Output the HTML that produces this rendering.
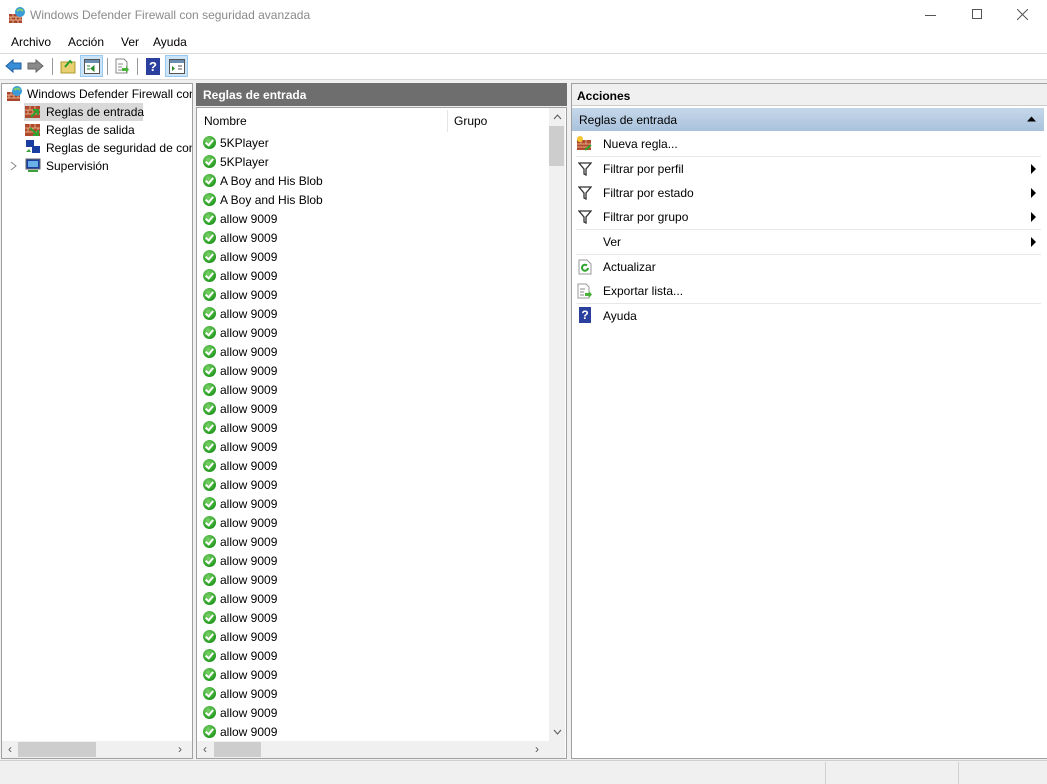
<!DOCTYPE html>
<html><head><meta charset="utf-8"><style>
*{margin:0;padding:0;box-sizing:border-box}
body{width:1047px;height:784px;overflow:hidden;background:#f0f0f0;font-family:"Segoe UI","Liberation Sans",sans-serif;font-size:12px;color:#000;position:relative}
.a{position:absolute}
.t{position:absolute;white-space:nowrap;line-height:16px}
.chk{position:absolute;width:13px;height:13px;border-radius:50%;background:radial-gradient(circle at 40% 35%,#7ed36b,#239a1f 70%,#157012);}
.chk:after{content:"";position:absolute;left:4px;top:2px;width:3px;height:6px;border:solid #fff;border-width:0 2px 2px 0;transform:rotate(40deg)}
.arr{position:absolute;width:0;height:0;border-top:5px solid transparent;border-bottom:5px solid transparent;border-left:5px solid #000}
.sep{position:absolute;left:576px;width:465px;height:1px;background:#e8e8e8}
.fun{position:absolute;width:14px;height:14px}
</style></head><body>
<div class="a" style="left:0;top:0;width:1047px;height:53px;background:#fff"></div>
<svg class="a" style="left:8px;top:6px" width="18" height="18"><rect x="1" y="8" width="13" height="9" fill="#a8452a"/><path d="M1 11h13M1 14h13M5 8v3M10 8v3M3 11v3M8 11v3M12 11v3M5 14v3M10 14v3" stroke="#e8b08a" stroke-width="1"/><circle cx="12" cy="6" r="5" fill="#3a9bd8"/><path d="M9 5q3-3 6 0" stroke="#7fd06a" stroke-width="2" fill="none"/></svg>
<div class="t" style="left:30px;top:7px;color:#8a8a8a;font-size:12px">Windows Defender Firewall con seguridad avanzada</div>
<div class="a" style="left:925px;top:15px;width:11px;height:1px;background:#555"></div>
<div class="a" style="left:972px;top:9px;width:10px;height:10px;border:1px solid #555"></div>
<svg class="a" style="left:1017px;top:9px" width="11" height="11"><path d="M0 0L11 11M11 0L0 11" stroke="#555" stroke-width="1"/></svg>
<div class="t" style="left:11px;top:34px">Archivo</div>
<div class="t" style="left:68px;top:34px">Acción</div>
<div class="t" style="left:121px;top:34px">Ver</div>
<div class="t" style="left:153px;top:34px">Ayuda</div>
<div class="a" style="left:0;top:53px;width:1047px;height:1px;background:#d9d9d9"></div>
<div class="a" style="left:0;top:54px;width:1047px;height:25px;background:#fff"></div>
<svg class="a" style="left:5px;top:58px" width="40" height="16"><path d="M1 8l7-6v3h8v6H8v3z" fill="#3b8fd8" stroke="#1f5fa0"/><path d="M38 8l-7-6v3h-8v6h8v3z" fill="#8a8a8a" stroke="#666"/></svg>
<div class="a" style="left:52px;top:58px;width:1px;height:17px;background:#999"></div>
<svg class="a" style="left:60px;top:58px" width="16" height="16"><rect x="1" y="4" width="14" height="11" fill="#e8d070" stroke="#b09a30"/><path d="M5 9l5-6 2 2" stroke="#2a9a2a" stroke-width="2" fill="none"/></svg>
<div class="a" style="left:80px;top:55px;width:23px;height:22px;background:#cce4f7;border:1px solid #99c9ef"></div>
<svg class="a" style="left:84px;top:59px" width="16" height="15"><rect x="0.5" y="0.5" width="15" height="14" fill="#fff" stroke="#555"/><rect x="1" y="1" width="14" height="3" fill="#6a8db0"/><path d="M3 7h3M3 10h3M10 7l-3 2.5 3 2.5z" stroke="#2a8a2a" fill="#2a8a2a"/></svg>
<div class="a" style="left:107px;top:58px;width:1px;height:17px;background:#999"></div>
<svg class="a" style="left:114px;top:58px" width="16" height="16"><path d="M2 1h8l3 3v11H2z" fill="#fff" stroke="#888"/><path d="M4 6h5M4 9h4M4 12h4" stroke="#888"/><path d="M8 10h4v-2l3 3.5-3 3.5v-2H8z" fill="#4ab23a"/></svg>
<div class="a" style="left:137px;top:58px;width:1px;height:17px;background:#999"></div>
<div class="a" style="left:146px;top:58px;width:14px;height:17px;background:#2b3f9e;color:#fff;font-weight:bold;font-size:13px;text-align:center;line-height:17px">?</div>
<div class="a" style="left:165px;top:55px;width:23px;height:22px;background:#cce4f7;border:1px solid #99c9ef"></div>
<svg class="a" style="left:169px;top:59px" width="16" height="15"><rect x="0.5" y="0.5" width="15" height="14" fill="#fff" stroke="#555"/><rect x="1" y="1" width="14" height="3" fill="#6a8db0"/><path d="M3 7l3 2.5-3 2.5z" fill="#2a8a2a"/><path d="M9 7h4M9 10h4" stroke="#555"/></svg>
<div class="a" style="left:0;top:79px;width:1047px;height:1px;background:#d9d9d9"></div>
<div class="a" style="left:1px;top:83px;width:192px;height:676px;background:#fff;border:1px solid #a0a0a0"></div>
<svg class="a" style="left:6px;top:85px" width="18" height="17"><rect x="1" y="7" width="13" height="9" fill="#a8452a"/><path d="M1 10h13M1 13h13M5 7v3M10 7v3M3 10v3M8 10v3M12 10v3" stroke="#e8b08a"/><circle cx="11" cy="6" r="5" fill="#3a9bd8"/><path d="M8 5q3-3 6 0" stroke="#7fd06a" stroke-width="2" fill="none"/></svg>
<div class="t" style="left:27px;top:86px;width:165px;overflow:hidden">Windows Defender Firewall con</div>
<div class="a" style="left:24px;top:103px;width:119px;height:18px;background:#d9d9d9"></div>
<svg class="a" style="left:25px;top:105px" width="16" height="14"><rect x="0" y="1" width="15" height="12" fill="#b04a2e"/><path d="M0 5h15M0 9h15M5 1v4M10 1v4M3 5v4M8 5v4M13 5v4" stroke="#e3a87f"/><path d="M6 12l7-7M8 5h5v5" stroke="#2ea42e" stroke-width="2" fill="none"/></svg>
<div class="t" style="left:46px;top:104px">Reglas de entrada</div>
<svg class="a" style="left:25px;top:123px" width="16" height="14"><rect x="0" y="1" width="15" height="12" fill="#b04a2e"/><path d="M0 5h15M0 9h15M5 1v4M10 1v4M3 5v4M8 5v4M13 5v4" stroke="#e3a87f"/><path d="M5 5l8 7M8 12h5V7" stroke="#2ea42e" stroke-width="2" fill="none"/></svg>
<div class="t" style="left:46px;top:122px">Reglas de salida</div>
<svg class="a" style="left:25px;top:140px" width="16" height="15"><rect x="1" y="0" width="8" height="7" fill="#1a3ea0"/><rect x="7" y="6" width="8" height="7" fill="#1a3ea0"/><path d="M1 12h5l-2-3z" fill="#3ca33c"/></svg>
<div class="t" style="left:46px;top:140px;width:146px;overflow:hidden">Reglas de seguridad de con</div>
<svg class="a" style="left:10px;top:161px" width="8" height="10"><path d="M1 1l5 4-5 4" stroke="#888" fill="none"/></svg>
<svg class="a" style="left:25px;top:158px" width="16" height="15"><rect x="1" y="1" width="14" height="10" fill="#1a3ea0" stroke="#666"/><rect x="3" y="3" width="10" height="6" fill="#6ab0e8"/><path d="M3 13h10" stroke="#3ca33c" stroke-width="2"/></svg>
<div class="t" style="left:46px;top:158px">Supervisión</div>
<div class="a" style="left:2px;top:741px;width:190px;height:17px;background:#f0f0f0"></div>
<div class="a" style="left:18px;top:742px;width:78px;height:15px;background:#cdcdcd"></div>
<div class="t" style="left:8px;top:741px;color:#555;font-size:12px">‹</div>
<div class="t" style="left:178px;top:741px;color:#555;font-size:12px">›</div>
<div class="a" style="left:196px;top:83px;width:371px;height:23px;background:#6e6e6e"></div>
<div class="t" style="left:203px;top:87px;color:#fff;font-weight:bold">Reglas de entrada</div>
<div class="a" style="left:196px;top:107px;width:371px;height:652px;background:#fff;border:1px solid #a0a0a0"></div>
<div class="t" style="left:204px;top:113px">Nombre</div>
<div class="a" style="left:447px;top:110px;width:1px;height:22px;background:#e5e5e5"></div>
<div class="t" style="left:454px;top:113px">Grupo</div>
<div class="a" style="left:549px;top:108px;width:16px;height:633px;background:#f0f0f0"></div>
<div class="a" style="left:549px;top:126px;width:15px;height:40px;background:#cdcdcd"></div>
<svg class="a" style="left:553px;top:114px" width="9" height="6"><path d="M1 5l3.5-4 3.5 4" stroke="#555" fill="none"/></svg>
<svg class="a" style="left:553px;top:729px" width="9" height="6"><path d="M1 1l3.5 4 3.5-4" stroke="#555" fill="none"/></svg>
<div id="rows"></div>
<div class="a" style="left:197px;top:741px;width:368px;height:17px;background:#f0f0f0"></div>
<div class="a" style="left:214px;top:742px;width:47px;height:15px;background:#cdcdcd"></div>
<div class="t" style="left:203px;top:741px;color:#555">‹</div>
<div class="t" style="left:535px;top:741px;color:#555">›</div>
<div class="a" style="left:571px;top:83px;width:476px;height:676px;background:#fff;border:1px solid #a0a0a0;border-right:none"></div>
<div class="a" style="left:572px;top:84px;width:475px;height:22px;background:#f0f0f0;border-bottom:1px solid #ccc"></div>
<div class="t" style="left:577px;top:88px;font-weight:bold">Acciones</div>
<div class="a" style="left:572px;top:108px;width:472px;height:23px;background:linear-gradient(#c6d7ea,#a9c2dd)"></div>
<div class="t" style="left:579px;top:112px">Reglas de entrada</div>
<svg class="a" style="left:1027px;top:116px" width="9" height="6"><path d="M0 5.5l4.5-5 4.5 5z" fill="#000"/></svg>
<svg class="a" style="left:577px;top:136px" width="16" height="16"><rect x="0" y="4" width="14" height="10" fill="#b04a2e"/><path d="M0 8h14M0 11h14M4 4v4M9 4v4" stroke="#e3a87f"/><circle cx="3" cy="3" r="3" fill="#f3c530"/><path d="M8 14l6-5" stroke="#2ea42e" stroke-width="2"/></svg>
<div class="t" style="left:603px;top:136px">Nueva regla...</div>
<div class="sep" style="top:156px"></div>
<div class="t" style="left:603px;top:161px">Filtrar por perfil</div>
<div class="t" style="left:603px;top:185px">Filtrar por estado</div>
<div class="t" style="left:603px;top:209px">Filtrar por grupo</div>
<svg class="fun" style="left:578px;top:162px"><path d="M1 1h12L8 7v6L6 12V7z" fill="#fff" stroke="#333" stroke-width="1.3"/></svg>
<svg class="fun" style="left:578px;top:186px"><path d="M1 1h12L8 7v6L6 12V7z" fill="#fff" stroke="#333" stroke-width="1.3"/></svg>
<svg class="fun" style="left:578px;top:210px"><path d="M1 1h12L8 7v6L6 12V7z" fill="#fff" stroke="#333" stroke-width="1.3"/></svg>
<div class="arr" style="left:1031px;top:164px"></div>
<div class="arr" style="left:1031px;top:188px"></div>
<div class="arr" style="left:1031px;top:212px"></div>
<div class="sep" style="top:229px"></div>
<div class="t" style="left:603px;top:234px">Ver</div>
<div class="arr" style="left:1031px;top:237px"></div>
<div class="sep" style="top:254px"></div>
<svg class="a" style="left:578px;top:259px" width="14" height="16"><path d="M1 1h8l4 4v10H1z" fill="#fff" stroke="#999"/><path d="M10 9a3 3 0 1 1-1-2.5" stroke="#2ea42e" stroke-width="2" fill="none"/></svg>
<div class="t" style="left:603px;top:259px">Actualizar</div>
<svg class="a" style="left:577px;top:283px" width="16" height="16"><path d="M1 1h8l3 3v11H1z" fill="#fff" stroke="#999"/><path d="M3 6h5M3 9h4M3 12h4" stroke="#888"/><path d="M8 10h4v-2l3 3.5-3 3.5v-2H8z" fill="#4ab23a"/></svg>
<div class="t" style="left:603px;top:283px">Exportar lista...</div>
<div class="sep" style="top:303px"></div>
<div class="a" style="left:579px;top:307px;width:12px;height:16px;background:#2b3f9e;color:#fff;font-weight:bold;font-size:12px;text-align:center;line-height:16px">?</div>
<div class="t" style="left:603px;top:308px">Ayuda</div>
<div class="a" style="left:0;top:760px;width:1047px;height:1px;background:#d0d0d0"></div>
<div class="a" style="left:825px;top:762px;width:1px;height:22px;background:#d0d0d0"></div>
<div class="a" style="left:958px;top:762px;width:1px;height:22px;background:#d0d0d0"></div>
<script>
var names=["5KPlayer","5KPlayer","A Boy and His Blob","A Boy and His Blob"];
var h="";for(var i=0;i<32;i++){var y=143+i*19;var n=names[i]||"allow 9009";
h+='<div class="chk" style="left:203px;top:'+(y-7)+'px"></div><div class="t" style="left:220px;top:'+(y-8)+'px">'+n+'</div>';}
document.getElementById("rows").innerHTML=h;
</script>
</body></html>
